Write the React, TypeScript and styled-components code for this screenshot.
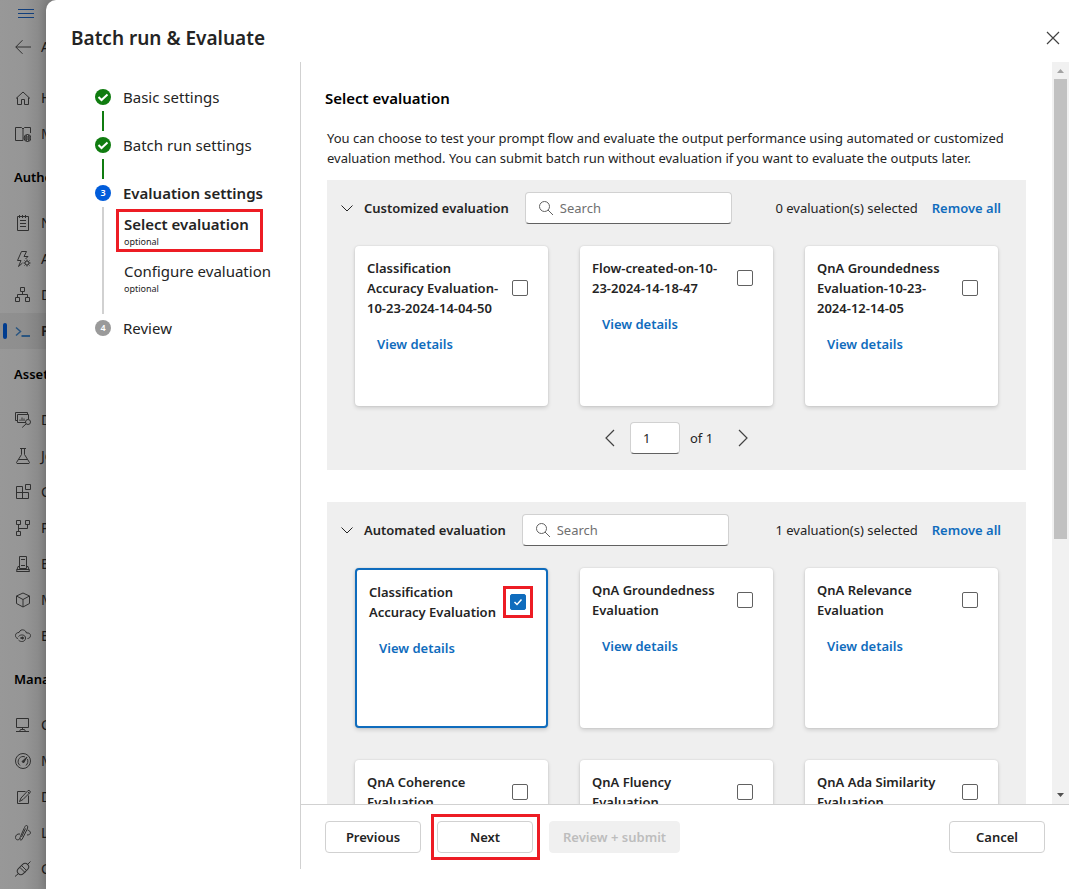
import React, { useState } from "react";
import styled, { createGlobalStyle, css } from "styled-components";

const GlobalStyle = createGlobalStyle`
  *, *::before, *::after { box-sizing: border-box; }
  html, body { margin: 0; height: 100%; }
  body {
    font-family: "Segoe UI", "Noto Sans", "Open Sans", sans-serif;
    font-size: 13px;
    line-height: 20px;
    color: #242424;
    background: #989898;
    overflow: hidden;
  }
  button, input { font: inherit; color: inherit; }
  h1, h2, h3, p, ol, ul { margin: 0; padding: 0; }
  ol, ul { list-style: none; }
`;

const Page = styled.div`
  position: relative;
  height: 100vh;
  overflow: hidden;
`;

/* ---------- navigation behind the dialog ---------- */

const Sidebar = styled.nav`
  width: 56px;
  min-height: 100%;
  overflow: hidden;
  white-space: nowrap;
  background: linear-gradient(90deg, #989898 0, #969696 24px, #858585 46px);
`;

const MenuButton = styled.button`
  display: flex;
  align-items: center;
  height: 26px;
  padding: 0 0 0 18px;
  border: 0;
  background: none;
  color: #123f7c;
`;

const NavLink = styled.a<{ $active?: boolean; $back?: boolean }>`
  position: relative;
  display: flex;
  align-items: center;
  gap: 10px;
  height: 36px;
  padding-left: 15px;
  font-size: 14px;
  color: #1b1b1b;
  text-decoration: none;
  svg { flex: none; color: #303030; }
  ${(p) => p.$back && css`height: 42px; margin-bottom: 12px;`}
  ${(p) =>
    p.$active &&
    css`
      background: rgba(0, 0, 0, 0.05);
      font-weight: 600;
      svg { color: #2a5580; }
      &::before {
        content: "";
        position: absolute;
        left: 3px;
        width: 4px;
        height: 16px;
        border-radius: 2px;
        background: #003c8f;
      }
    `}
`;

const NavHeading = styled.h3`
  height: 50px;
  margin-bottom: 3px;
  padding-left: 14px;
  font-size: 13px;
  font-weight: 600;
  line-height: 50px;
  color: #000;
`;

/* ---------- dialog ---------- */

const Dialog = styled.section`
  position: absolute;
  top: 0;
  right: 0;
  bottom: 0;
  left: 46px;
  display: flex;
  flex-direction: column;
  padding: 0 18px 20px 0;
  border-top-left-radius: 10px;
  background: #fff;
  box-shadow: 0 0 8px rgba(0, 0, 0, 0.2);
`;

const DialogHeader = styled.header`
  display: flex;
  flex: none;
  align-items: center;
  justify-content: space-between;
  height: 62px;
  padding: 13px 0 0 25px;
`;

const Title = styled.h1`
  font-size: 19px;
  font-weight: 600;
  line-height: 28px;
`;

const IconButton = styled.button`
  display: flex;
  align-items: center;
  justify-content: center;
  width: 32px;
  height: 32px;
  padding: 0;
  border: 0;
  background: none;
  color: #424242;
`;

const DialogBody = styled.div`
  display: flex;
  flex: 1;
  min-height: 0;
`;

const Steps = styled.ol`
  flex: none;
  width: 254px;
  padding: 27px 0 0 49px;
`;

const Step = styled.li`
  display: flex;
  gap: 12px;
  min-height: 48px;
  font-size: 15px;
  line-height: 16px;
`;

const StepTrack = styled.div`
  display: flex;
  flex-direction: column;
  align-items: center;
  gap: 6px;
`;

const Connector = styled.span<{ $done?: boolean }>`
  flex: 1;
  width: 2px;
  margin-bottom: 6px;
  background: ${(p) => (p.$done ? "#107c10" : "#d1d1d1")};
`;

const StepNumber = styled.span<{ $current?: boolean }>`
  width: 16px;
  height: 16px;
  border-radius: 50%;
  background: ${(p) => (p.$current ? "#015cda" : "#9a9a9a")};
  color: #fff;
  font-size: 9px;
  font-weight: 600;
  text-align: center;
`;

const StepLabel = styled.span<{ $current?: boolean }>`
  font-weight: ${(p) => (p.$current ? 600 : 400)};
`;

const SubSteps = styled.ul`
  display: flex;
  flex-direction: column;
  align-items: flex-start;
  gap: 4px;
  margin: 8px 0 21px -7px;
`;

const SubStep = styled.li<{ $current?: boolean }>`
  padding: 2px 11px 0 5px;
  height: 43px;
  border: 3px solid ${(p) => (p.$current ? "#ed1c24" : "transparent")};
  font-weight: ${(p) => (p.$current ? 600 : 400)};
  line-height: 20px;
  white-space: nowrap;
`;

const Optional = styled.small`
  display: block;
  font-size: 9px;
  font-weight: 400;
  line-height: 16px;
`;

const Content = styled.div`
  display: flex;
  flex: 1;
  flex-direction: column;
  min-width: 0;
  border-left: 1px solid #d1d1d1;
`;

const ScrollRegion = styled.div`
  display: flex;
  flex: 1;
  min-height: 0;
`;

const Scroller = styled.main`
  flex: 1;
  min-width: 0;
  padding: 26px 26px 32px;
  overflow-y: auto;
  scrollbar-width: none;
`;

const SectionTitle = styled.h2`
  margin-left: -2px;
  font-size: 15px;
  font-weight: 600;
  line-height: 20px;
  color: #000;
`;

const Description = styled.p`
  margin: 20px 0 12px;
`;

const Panel = styled.section`
  margin-bottom: 32px;
  padding: 12px 28px 16px;
  background: #efefef;
`;

const PanelHeader = styled.header`
  display: flex;
  align-items: center;
  height: 32px;
  margin: 0 -3px 22px -14px;
`;

const Collapse = styled.button`
  display: flex;
  align-items: center;
  gap: 11px;
  padding: 0;
  border: 0;
  background: none;
  font-weight: 600;
  white-space: nowrap;
`;

const SearchBox = styled.label`
  display: flex;
  align-items: center;
  gap: 6px;
  width: 207px;
  height: 32px;
  margin-left: 16px;
  padding: 0 12px;
  border: 1px solid #d1d1d1;
  border-bottom-color: #616161;
  border-radius: 4px;
  background: #fff;
  color: #616161;
`;

const SearchInput = styled.input`
  flex: 1;
  min-width: 0;
  padding: 0;
  border: 0;
  outline: 0;
  background: none;
  &::placeholder { color: #707070; opacity: 1; }
`;

const Selected = styled.span`
  margin-left: auto;
  white-space: nowrap;
`;

const TextButton = styled.button`
  padding: 0;
  border: 0;
  background: none;
  font-weight: 600;
  white-space: nowrap;
  color: #0f6cbd;
`;

const RemoveAll = styled(TextButton)`
  margin-left: 14px;
`;

const Cards = styled.div`
  display: grid;
  grid-template-columns: repeat(3, minmax(0, 1fr));
  gap: 32px;
`;

const Card = styled.article<{ $selected?: boolean }>`
  height: 160px;
  padding: 12px;
  border: ${(p) => (p.$selected ? "2px solid #0f6cbd" : "0")};
  border-radius: 4px;
  background: #fff;
  box-shadow: 0 0 2px rgba(0, 0, 0, 0.12), 0 2px 4px rgba(0, 0, 0, 0.14);
`;

const CardHeader = styled.label`
  display: flex;
  align-items: center;
  justify-content: space-between;
  padding-right: 8px;
  font-weight: 600;
`;

const CardTitle = styled.span`
  flex: 1;
  min-width: 0;
`;

const DetailsButton = styled(TextButton)`
  height: 32px;
  margin-top: 10px;
  padding: 0 10px;
`;

const CheckFrame = styled.span<{ $marked?: boolean }>`
  position: relative;
  display: flex;
  margin-left: 8px;
  ${(p) =>
    p.$marked &&
    css`
      &::after {
        content: "";
        position: absolute;
        inset: -8px -7px;
        border: 3px solid #ed1c24;
        pointer-events: none;
      }
    `}
`;

const Checkbox = styled.input`
  appearance: none;
  width: 16px;
  height: 16px;
  margin: 0;
  border: 1px solid #616161;
  border-radius: 2px;
  background: #fff;
  &:checked { border-color: #0f6cbd; background: #0f6cbd; }
`;

const Tick = styled.svg`
  position: absolute;
  inset: 0;
  pointer-events: none;
`;

const Pager = styled.div`
  display: flex;
  align-items: center;
  justify-content: center;
  gap: 4px;
  margin-top: 16px;
`;

const PageInput = styled.input`
  width: 50px;
  height: 32px;
  padding: 0 12px;
  border: 1px solid #d1d1d1;
  border-bottom-color: #616161;
  border-radius: 4px;
  background: #fff;
`;

const PageCount = styled.span`
  padding: 0 10px 0 6px;
`;

const Scrollbar = styled.div`
  display: flex;
  flex: none;
  flex-direction: column;
  align-items: center;
  width: 17px;
  background: #f1f1f1;
`;

const ScrollArrow = styled.svg`
  flex: none;
`;

const ScrollTrack = styled.div`
  flex: 1;
  width: 13px;
`;

const ScrollThumb = styled.div`
  height: 65%;
  background: #c1c1c1;
`;

const Footer = styled.footer`
  display: flex;
  flex: none;
  align-items: center;
  gap: 16px;
  height: 65px;
  padding: 0 24px;
  border-top: 1px solid #d1d1d1;
`;

const Button = styled.button<{ $marked?: boolean; $end?: boolean }>`
  position: relative;
  min-width: 96px;
  height: 32px;
  padding: 0 13px;
  border: 1px solid #d1d1d1;
  border-radius: 4px;
  background: #fff;
  font-weight: 600;
  white-space: nowrap;
  ${(p) => p.$end && css`margin-left: auto;`}
  ${(p) =>
    p.$marked &&
    css`
      &::after {
        content: "";
        position: absolute;
        inset: -8px -8px -8px -7px;
        border: 3px solid #ed1c24;
        pointer-events: none;
      }
    `}
  &:disabled { border-color: #f0f0f0; background: #f0f0f0; color: #bdbdbd; }
`;

/* ---------- icons ---------- */

function Icon({ size = 16, children }: { size?: number; children: React.ReactNode }) {
  return (
    <svg width={size} height={size} viewBox={`0 0 ${size} ${size}`} fill="none" stroke="currentColor" aria-hidden="true">
      {children}
    </svg>
  );
}

const navIcons: Record<string, React.ReactNode> = {
  back: <path d="M16 8H.8M7.5 1.2.8 8l6.7 6.8" />,
  home: <path d="M1 8.5 8 2l7 6.5M2.5 7.5v7h4v-5h3v5h4v-7" />,
  catalog: (
    <>
      <path d="M8 14.5H.5v-13h6L8 3l1.500-1.500h6V7M8 3v11.500" />
      <circle cx="12.500" cy="12" r="3.500" />
      <ellipse cx="12.500" cy="12" rx="1.500" ry="3.500" />
      <path d="M9 11h7M9 13h7" />
    </>
  ),
  notebook: <path d="M2.500 1.500h11v14h-11zM4.500 0v3M7.500 0v3M10.500 0v3M5 5.500h6M5 8.500h6M5 11.500h6" />,
  automl: (
    <>
      <path d="M6 9.500H2.500L6.500.5h5l-2.500 5h4L10.500 8M6 9.500l-2.500 6 4-3.500" />
      <circle cx="12" cy="12" r="2" />
      <path d="M12 8.500V10M12 14v1.500M8.500 12H10M14 12h1.500M9.500 9.500l1 1M13.500 13.500l1 1M14.500 9.500l-1 1M10.500 13.500l-1 1" />
    </>
  ),
  designer: <path d="M5.500.5h4v4h-4zM.5 10.500h4v4h-4zM10.500 10.500h4v4h-4zM7.500 4.500v3M2.500 10.500v-3h10v3" />,
  prompt: (
    <>
      <path d="m1 4.500 4.500 4L1 12.500" strokeWidth="1.500" />
      <path d="M6.500 13H15" strokeWidth="2" />
    </>
  ),
  data: (
    <>
      <path d="M2.500 8.500h-2v-8h12v2M11 10.500H2.500v-8h11V7M5 9V7.500M7 9V5.500M9 9V6.500" />
      <circle cx="13" cy="10" r="2.500" />
      <path d="m11.200 11.800-4 3.700" />
    </>
  ),
  flask: <path d="M5 .5h6M6.500.5v6L1.500 14.500l.5 1h12l.5-1-5-8v-6M3.500 11.500h9" />,
  components: <path d="M7.500 8.500v-6h-6v12h12v-6H1.500M7.500 8.500v6M10.500.5h5v5h-5z" />,
  pipelines: <path d="M1.500.5h4v4h-4zM10.500.5h4v4h-4zM1.500 11.500h4v4h-4zM3.500 4.500v7M3.500 8.500h9v-4" />,
  environments: <path d="M4.500 12.500V.5h7v12zM6 3.500h4M6 9.500h4M4.500 10.500H3l-1.500 5h13l-1.500-5h-1.500M1.500 13.500h13" />,
  models: <path d="m8 1 6.500 3v7.500L8 15l-6.500-3.500V4zM1.500 4 8 7.500 14.500 4M8 7.500V15" />,
  endpoints: (
    <>
      <path d="M3 10.500C1 10 .5 9 .5 7.500c0-2 1.500-3 3.500-3C5 2 7 1.500 8.500 2c1.500.3 2.500 1.500 3 3 2.500-.5 4 1 4 2.500 0 2-1.500 3-3 3" />
      <path d="M3.500 8.500c2-2.500 7-2 7 1.500 0 4-5 4.500-7 2M5 10h3" />
      <circle cx="7.500" cy="10" r="1" fill="currentColor" />
    </>
  ),
  compute: <path d="M1.500 1.500h12v9h-12zM7.500 10.500v2M1 14.500h13M4.500 14.500l1-2h4l1 2" />,
  monitoring: (
    <>
      <circle cx="8" cy="8" r="7.500" />
      <path d="M5 12.500C1 9 4 3.500 8 3.500c1 0 1.500.2 2 .5M12.500 6c.8 2.500.3 4.500-1.500 6.500" />
      <path d="M12 4 7 8.500 8.500 10z" fill="currentColor" />
    </>
  ),
  labeling: <path d="M10.500 2.500h-8v12h11v-8M13 1.500 6 9l-1.500 3.500L8 10.500 15.500 3 14.500 1.500zM13 3l1.500 1.500" />,
  linked: <path d="M5 9C2 8.500.5 10.500.5 12.500c0 3 4 3 4.500.5M6.500 12l4-8.500M7 14.500l5-10c1-2 1-4-.5-4s-1.500 1.500-2.500 3l-3.500 8c-1 2-.5 4 .5 3.500zM12.500 5c4 1 4 5-.5 5" />,
  connections: (
    <>
      <path d="m0 15.500 3.500-3M12 4l3.500-3.500" />
      <rect x="1.500" y="4.500" width="13" height="7" rx="3.500" transform="rotate(-45 8 8)" />
      <path d="m5 6.500 5 5M6.500 4.500l5 5" />
    </>
  ),
};

const ChevronDown = () => (
  <Icon size={12}><path d="m.5 3.500 5.500 5.500 5.500-5.500" /></Icon>
);

const SearchIcon = () => (
  <Icon>
    <circle cx="6.500" cy="6.500" r="5" />
    <path d="m10 10 5 5" />
  </Icon>
);

const DoneIcon = () => (
  <svg width="16" height="16" viewBox="0 0 16 16" aria-hidden="true">
    <circle cx="8" cy="8" r="8" fill="#107c10" />
    <path d="m3.500 8 3 3L12.500 5.500" fill="none" stroke="#fff" strokeWidth="2" />
  </svg>
);

/* ---------- data ---------- */

type NavEntry = { label: string; icon?: string; active?: boolean; back?: boolean };

const navigation: NavEntry[] = [
  { label: "All", icon: "back", back: true },
  { label: "Home", icon: "home" },
  { label: "Models", icon: "catalog" },
  { label: "Authoring" },
  { label: "Notebooks", icon: "notebook" },
  { label: "AutoML", icon: "automl" },
  { label: "Designer", icon: "designer" },
  { label: "Prompt", icon: "prompt", active: true },
  { label: "Assets" },
  { label: "Data", icon: "data" },
  { label: "Jobs", icon: "flask" },
  { label: "Components", icon: "components" },
  { label: "Pipelines", icon: "pipelines" },
  { label: "Environments", icon: "environments" },
  { label: "Models", icon: "models" },
  { label: "Endpoints", icon: "endpoints" },
  { label: "Manage" },
  { label: "Compute", icon: "compute" },
  { label: "Monitoring", icon: "monitoring" },
  { label: "Data Labeling", icon: "labeling" },
  { label: "Linked Services", icon: "linked" },
  { label: "Connections", icon: "connections" },
];

const customized = [
  "Classification Accuracy Evaluation-10-23-2024-14-04-50",
  "Flow-created-on-10-23-2024-14-18-47",
  "QnA Groundedness Evaluation-10-23-2024-12-14-05",
];

const automated = [
  "Classification Accuracy Evaluation",
  "QnA Groundedness Evaluation",
  "QnA Relevance Evaluation",
  "QnA Coherence Evaluation",
  "QnA Fluency Evaluation",
  "QnA Ada Similarity Evaluation",
];

/* ---------- parts ---------- */

type GroupProps = { title: string; names: string[]; initial?: string[]; children?: React.ReactNode };

function EvaluationGroup({ title, names, initial = [], children }: GroupProps) {
  const [selected, setSelected] = useState<string[]>(initial);
  const toggle = (name: string) =>
    setSelected((s) => (s.includes(name) ? s.filter((n) => n !== name) : [...s, name]));

  return (
    <Panel>
      <PanelHeader>
        <Collapse type="button" aria-expanded="true"><ChevronDown />{title}</Collapse>
        <SearchBox>
          <SearchIcon />
          <SearchInput type="text" placeholder="Search" aria-label={`Search ${title}`} />
        </SearchBox>
        <Selected>{selected.length} evaluation(s) selected</Selected>
        <RemoveAll type="button" onClick={() => setSelected([])}>Remove all</RemoveAll>
      </PanelHeader>
      <Cards>
        {names.map((name) => {
          const on = selected.includes(name);
          return (
            <Card key={name} $selected={on}>
              <CardHeader>
                <CardTitle>{name}</CardTitle>
                <CheckFrame $marked={on}>
                  <Checkbox type="checkbox" checked={on} onChange={() => toggle(name)} />
                  {on && (
                    <Tick width="16" height="16" viewBox="0 0 16 16" fill="none" stroke="#fff" strokeWidth="1.500">
                      <path d="m4.500 8 2.500 2.500 4.500-5" />
                    </Tick>
                  )}
                </CheckFrame>
              </CardHeader>
              <DetailsButton type="button">View details</DetailsButton>
            </Card>
          );
        })}
      </Cards>
      {children}
    </Panel>
  );
}

export default function App() {
  const [offset, setOffset] = useState(0);
  const onScroll = (e: React.UIEvent<HTMLElement>) => {
    const el = e.currentTarget;
    const range = el.scrollHeight - el.clientHeight;
    setOffset(range > 0 ? el.scrollTop / range : 0);
  };

  return (
    <Page>
      <GlobalStyle />
      <Sidebar aria-label="Workspace">
        <MenuButton type="button" aria-label="Toggle navigation">
          <Icon><path d="M0 4.500h16M0 8.500h16M0 12.500h16" /></Icon>
        </MenuButton>
        {navigation.map((item) =>
          item.icon ? (
            <NavLink key={item.icon} href="#" $active={item.active} $back={item.back}>
              <Icon>{navIcons[item.icon]}</Icon>
              {item.label}
            </NavLink>
          ) : (
            <NavHeading key={item.label}>{item.label}</NavHeading>
          )
        )}
      </Sidebar>

      <Dialog role="dialog" aria-labelledby="dialog-title">
        <DialogHeader>
          <Title id="dialog-title">Batch run &amp; Evaluate</Title>
          <IconButton type="button" aria-label="Close">
            <Icon><path d="m2 2 12 12M14 2 2 14" strokeWidth="1.200" /></Icon>
          </IconButton>
        </DialogHeader>

        <DialogBody>
          <Steps>
            <Step>
              <StepTrack><DoneIcon /><Connector $done /></StepTrack>
              <StepLabel>Basic settings</StepLabel>
            </Step>
            <Step>
              <StepTrack><DoneIcon /><Connector $done /></StepTrack>
              <StepLabel>Batch run settings</StepLabel>
            </Step>
            <Step>
              <StepTrack><StepNumber $current>3</StepNumber><Connector /></StepTrack>
              <div>
                <StepLabel $current>Evaluation settings</StepLabel>
                <SubSteps>
                  <SubStep $current>Select evaluation<Optional>optional</Optional></SubStep>
                  <SubStep>Configure evaluation<Optional>optional</Optional></SubStep>
                </SubSteps>
              </div>
            </Step>
            <Step>
              <StepTrack><StepNumber>4</StepNumber></StepTrack>
              <StepLabel>Review</StepLabel>
            </Step>
          </Steps>

          <Content>
            <ScrollRegion>
              <Scroller onScroll={onScroll}>
                <SectionTitle>Select evaluation</SectionTitle>
                <Description>
                  You can choose to test your prompt flow and evaluate the output performance using automated or
                  customized evaluation method. You can submit batch run without evaluation if you want to evaluate
                  the outputs later.
                </Description>
                <EvaluationGroup title="Customized evaluation" names={customized}>
                  <Pager>
                    <IconButton type="button" aria-label="Previous page">
                      <Icon size={18}><path d="M13 1 5 9l8 8" strokeWidth="1.200" /></Icon>
                    </IconButton>
                    <PageInput type="text" defaultValue="1" aria-label="Page" />
                    <PageCount>of 1</PageCount>
                    <IconButton type="button" aria-label="Next page">
                      <Icon size={18}><path d="m5 1 8 8-8 8" strokeWidth="1.200" /></Icon>
                    </IconButton>
                  </Pager>
                </EvaluationGroup>
                <EvaluationGroup title="Automated evaluation" names={automated} initial={[automated[0]]} />
              </Scroller>
              <Scrollbar aria-hidden="true">
                <ScrollArrow width="17" height="17" viewBox="0 0 17 17"><path d="M5 11h7L8.500 7z" fill="#a3a3a3" /></ScrollArrow>
                <ScrollTrack>
                  <ScrollThumb style={{ marginTop: offset * 248 }} />
                </ScrollTrack>
                <ScrollArrow width="17" height="17" viewBox="0 0 17 17"><path d="M5 6h7l-3.500 4z" fill="#505050" /></ScrollArrow>
              </Scrollbar>
            </ScrollRegion>
            <Footer>
              <Button type="button">Previous</Button>
              <Button type="button" $marked>Next</Button>
              <Button type="button" disabled>Review + submit</Button>
              <Button type="button" $end>Cancel</Button>
            </Footer>
          </Content>
        </DialogBody>
      </Dialog>
    </Page>
  );
}
